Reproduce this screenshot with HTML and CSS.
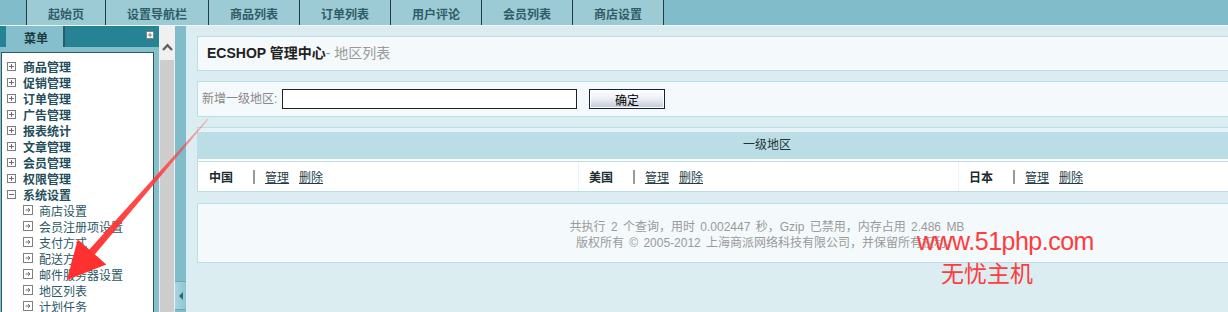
FILE: index.html
```html
<!DOCTYPE html>
<html lang="zh-CN">
<head>
    <meta charset="UTF-8">
    <title>ECSHOP 管理中心 - 地区列表</title>
    <link rel="stylesheet" href="styles.css">
</head>
<body>
    <svg class="defs" width="0" height="0">
        <symbol id="ico-plus" viewBox="0 0 9 9">
            <rect x="0.5" y="0.5" width="8" height="8" fill="#fff" stroke="#7d7d7d"/>
            <path d="M2 4.5h5M4.5 2v5" stroke="#6d6d6d" fill="none"/>
        </symbol>
        <symbol id="ico-minus" viewBox="0 0 9 9">
            <rect x="0.5" y="0.5" width="8" height="8" fill="#fff" stroke="#7d7d7d"/>
            <path d="M2 4.5h5" stroke="#6d6d6d" fill="none"/>
        </symbol>
        <symbol id="ico-link" viewBox="0 0 10 10">
            <rect x="0.5" y="0.5" width="9" height="9" fill="#fff" stroke="#808080"/>
            <path d="M2.5 5h4.5M5 3l2 2-2 2" stroke="#6d6d6d" fill="none"/>
        </symbol>
    </svg>

    <div class="top-nav">
        <ul class="nav-tabs">
            <li>起始页</li>
            <li>设置导航栏</li>
            <li>商品列表</li>
            <li>订单列表</li>
            <li>用户评论</li>
            <li>会员列表</li>
            <li>商店设置</li>
        </ul>
    </div>

    <div class="frame">
        <div class="sidebar">
            <div class="menu-head">
                <span class="menu-tab">菜单</span>
                <svg class="menu-toggle" width="8" height="8"><use href="#ico-plus"/></svg>
            </div>
            <div class="menu-panel">
                <ul class="menu-list">
                    <li class="menu-item"><svg class="ico"><use href="#ico-plus"/></svg>商品管理</li>
                    <li class="menu-item"><svg class="ico"><use href="#ico-plus"/></svg>促销管理</li>
                    <li class="menu-item"><svg class="ico"><use href="#ico-plus"/></svg>订单管理</li>
                    <li class="menu-item"><svg class="ico"><use href="#ico-plus"/></svg>广告管理</li>
                    <li class="menu-item"><svg class="ico"><use href="#ico-plus"/></svg>报表统计</li>
                    <li class="menu-item"><svg class="ico"><use href="#ico-plus"/></svg>文章管理</li>
                    <li class="menu-item"><svg class="ico"><use href="#ico-plus"/></svg>会员管理</li>
                    <li class="menu-item"><svg class="ico"><use href="#ico-plus"/></svg>权限管理</li>
                    <li class="menu-item"><svg class="ico"><use href="#ico-minus"/></svg>系统设置</li>
                    <li class="sub-item"><svg class="ico-sub"><use href="#ico-link"/></svg>商店设置</li>
                    <li class="sub-item"><svg class="ico-sub"><use href="#ico-link"/></svg>会员注册项设置</li>
                    <li class="sub-item"><svg class="ico-sub"><use href="#ico-link"/></svg>支付方式</li>
                    <li class="sub-item"><svg class="ico-sub"><use href="#ico-link"/></svg>配送方式</li>
                    <li class="sub-item"><svg class="ico-sub"><use href="#ico-link"/></svg>邮件服务器设置</li>
                    <li class="sub-item"><svg class="ico-sub"><use href="#ico-link"/></svg>地区列表</li>
                    <li class="sub-item"><svg class="ico-sub"><use href="#ico-link"/></svg>计划任务</li>
                </ul>
            </div>
        </div>

        <div class="scrollbar">
            <div class="scroll-up">
                <svg width="11" height="8" viewBox="0 0 11 8"><path d="M1 7L5.5 2.2L10 7" stroke="#606060" stroke-width="2.4" fill="none"/></svg>
            </div>
            <div class="scroll-thumb"></div>
        </div>

        <div class="splitter">
            <div class="collapse-btn"><span class="tri"></span></div>
        </div>

        <div class="main">
            <div class="box title-box">
                <b>ECSHOP 管理中心</b><span class="sub-title">- 地区列表</span>
            </div>

            <div class="box form-box">
                <span class="label">新增一级地区:</span>
                <input class="text-input" type="text">
                <button class="btn" type="button">确定</button>
            </div>

            <div class="box list-box">
                <div class="list-head">一级地区</div>
                <div class="list-row">
                    <div class="cell"><span class="name">中国</span><span class="sep"></span><a href="#">管理</a><a href="#">删除</a></div>
                    <div class="cell"><span class="name">美国</span><span class="sep"></span><a href="#">管理</a><a href="#">删除</a></div>
                    <div class="cell"><span class="name">日本</span><span class="sep"></span><a href="#">管理</a><a href="#">删除</a></div>
                </div>
            </div>

            <div class="box footer-box">
                <div>共执行 2 个查询，用时 0.002447 秒，Gzip 已禁用，内存占用 2.486 MB</div>
                <div>版权所有 &copy; 2005-2012 上海商派网络科技有限公司，并保留所有权利。</div>
            </div>
        </div>
    </div>

    <div class="watermark">
        <div class="wm-url">www.51php.com</div>
        <div class="wm-name">无忧主机</div>
    </div>

    <svg class="arrow" width="1228" height="312" viewBox="0 0 1228 312">
        <defs>
            <linearGradient id="fade" gradientUnits="userSpaceOnUse" x1="208" y1="119" x2="67" y2="280">
                <stop offset="0" stop-color="#ff3b3b" stop-opacity="0.25"/>
                <stop offset="0.35" stop-color="#ff3b3b" stop-opacity="0.9"/>
                <stop offset="1" stop-color="#ff3030"/>
            </linearGradient>
        </defs>
        <polygon points="208.6,119.2 207.6,118.4 88.9,250.0 94.5,254.8" fill="url(#fade)"/>
        <polygon points="67,280 77.7,239.4 106.3,264.4" fill="#ff3030"/>
    </svg>
</body>
</html>
```

FILE: styles.css
```css
body {
    margin: 0;
    width: 1228px;
    height: 312px;
    overflow: hidden;
    position: relative;
    font-family: "Liberation Sans", "Noto Sans CJK SC", sans-serif;
    font-size: 12px;
    background-color: #dbedf1;
}
.defs {
    position: absolute;
}
ul {
    margin: 0;
    padding: 0;
    list-style: none;
}

/* top navigation */
.top-nav {
    height: 25px;
    padding-left: 26px;
    background-color: #80bcca;
    border-bottom: 1px solid #eef7f9;
}
.nav-tabs {
    display: flex;
    height: 25px;
    border-left: 1px solid #1e3c42;
}
.nav-tabs li {
    padding: 0 21px;
    height: 25px;
    line-height: 27px;
    background-color: #9ccbd6;
    border-right: 1px solid #1e3c42;
    color: #2f5c66;
    font-weight: bold;
    font-family: "Noto Sans CJK SC", sans-serif;
}

.frame {
    display: flex;
    height: 286px;
}

/* left menu */
.sidebar {
    width: 159px;
    display: flex;
    flex-direction: column;
    background-color: #86bfcc;
}
.menu-head {
    height: 21px;
    display: flex;
    padding-left: 6px;
    background-color: #268394;
}
.menu-tab {
    width: 54px;
    padding-left: 3px;
    height: 21px;
    line-height: 23px;
    text-align: center;
    background-color: #86bfcc;
    border-right: 2px solid #2c5b63;
    color: #1b3a40;
    font-weight: bold;
    font-family: "Noto Sans CJK SC", sans-serif;
}
.menu-toggle {
    margin: 5px 5px 0 auto;
}
.menu-panel {
    flex: 1;
    margin: 5px 5px 0 1px;
    padding-top: 5px;
    background-color: #fff;
    border: 1px solid #2c5b63;
    border-bottom: none;
}
.menu-list li {
    height: 16px;
    display: flex;
    align-items: center;
    font-family: "Noto Sans CJK SC", sans-serif;
}
.menu-item {
    padding-left: 5px;
    gap: 7px;
    color: #234e5b;
    font-weight: bold;
}
.sub-item {
    padding-left: 21px;
    gap: 6px;
    color: #2b5866;
}
.ico {
    width: 9px;
    height: 9px;
    flex: none;
}
.ico-sub {
    width: 10px;
    height: 10px;
    flex: none;
}

/* fake scrollbar + splitter */
.scrollbar {
    width: 16px;
    display: flex;
    flex-direction: column;
    background-color: #f0f0f0;
}
.scroll-up {
    height: 34px;
    display: flex;
    justify-content: center;
    padding-top: 17px;
    box-sizing: border-box;
}
.scroll-thumb {
    flex: 1;
    margin: 0 1px;
    background-color: #cdcdcd;
}
.splitter {
    width: 11px;
    display: flex;
    flex-direction: column;
    justify-content: flex-end;
    padding-bottom: 2px;
    box-sizing: border-box;
    background-color: #80bcca;
}
.collapse-btn {
    height: 27px;
    display: flex;
    align-items: center;
    padding-left: 4px;
    background: linear-gradient(to right, #a9d6e0, #8fc6d2);
    border-top: 1px solid #6aa9b7;
    border-bottom: 1px solid #6aa9b7;
}
.tri {
    width: 0;
    height: 0;
    border-top: 4px solid transparent;
    border-bottom: 4px solid transparent;
    border-right: 4px solid #2a6a78;
}

/* main content */
.main {
    flex: 1;
    overflow: hidden;
    padding: 10px 0 0 11px;
}
.box {
    width: 1140px;
    box-sizing: border-box;
    border: 1px solid #bbdde5;
    background-color: #f4f9fb;
}
.title-box {
    height: 35px;
    padding-left: 9px;
    line-height: 33px;
    font-size: 14px;
    color: #222;
    margin-bottom: 10px;
}
.title-box b {
    font-family: "Liberation Sans", "Noto Sans CJK SC", sans-serif;
}
.sub-title {
    color: #9a9a9a;
}
.form-box {
    height: 36px;
    display: flex;
    align-items: flex-start;
    padding: 7px 0 0 4px;
    margin-bottom: 10px;
}
.label {
    width: 79px;
    line-height: 20px;
    color: #888;
    font-size: 12px;
}
.text-input {
    width: 295px;
    height: 20px;
    box-sizing: border-box;
    margin: 0 0 0 1px;
    border: 1px solid #222;
    background-color: #fff;
    padding: 0 2px;
}
.btn {
    width: 76px;
    height: 20px;
    margin-left: 12px;
    padding: 0;
    border: 1px solid #14243c;
    box-shadow: inset 0 0 0 1px #fff;
    background: linear-gradient(#ffffff, #edf0f5 45%, #c2cbdb);
    font-family: "Noto Sans CJK SC", sans-serif;
    font-size: 12px;
    color: #000;
}
.list-box {
    padding-top: 4px;
    background-color: #e6f2f5;
    margin-bottom: 11px;
}
.list-head {
    height: 27px;
    line-height: 27px;
    text-align: center;
    background-color: #bbdde5;
    border-bottom: 2px solid #fff;
    color: #233;
}
.list-row {
    display: flex;
    height: 29px;
    border-top: 1px solid #bbdde5;
    background-color: #fff;
}
.cell {
    width: 380px;
    flex: none;
    box-sizing: border-box;
    padding-left: 10px;
    display: flex;
    align-items: center;
    border-left: 1px solid #edf3f5;
}
.cell:first-child {
    padding-left: 11px;
    border-left: none;
}
.name {
    width: 44px;
    font-weight: bold;
    color: #1b2b30;
}
.sep {
    width: 2px;
    height: 14px;
    margin-right: 10px;
    background-color: #9a9a9a;
}
.cell a {
    margin-right: 10px;
    color: #1f3d47;
    text-decoration: underline;
}
.footer-box {
    height: 60px;
    padding-top: 15px;
    text-align: center;
    line-height: 16px;
    color: #9a9a9a;
    word-spacing: 2px;
}

/* overlays: watermark and annotation arrow */
.watermark {
    position: absolute;
    left: 917px;
    top: 229px;
    color: #ff3c3c;
}
.wm-url {
    font-size: 25px;
    line-height: 25px;
    letter-spacing: -0.5px;
}
.wm-name {
    margin: 7px 0 0 24px;
    font-family: "Noto Sans CJK SC", sans-serif;
    font-size: 23px;
    line-height: 23px;
}
.arrow {
    position: absolute;
    left: 0;
    top: 0;
    pointer-events: none;
}
```
